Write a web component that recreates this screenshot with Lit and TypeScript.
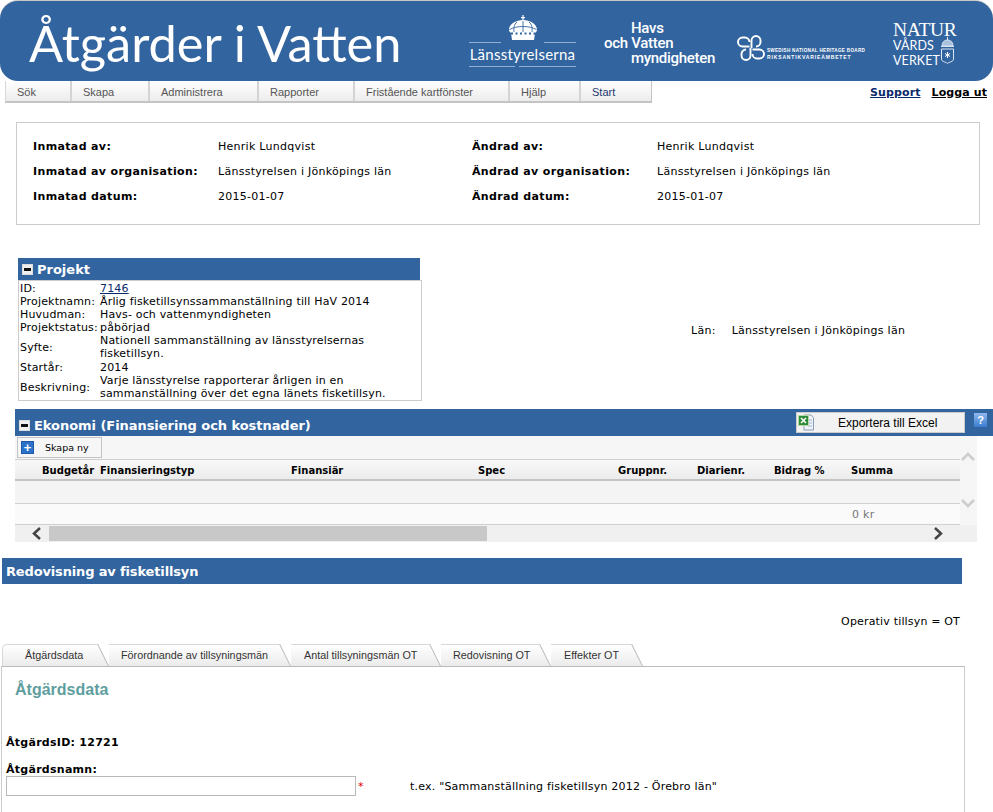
import { LitElement, html, css } from 'lit';
import { customElement } from 'lit/decorators.js';

const menu = [
  ['Sök', 66],
  ['Skapa', 78],
  ['Administrera', 109],
  ['Rapporter', 96],
  ['Fristående kartfönster', 155],
  ['Hjälp', 71],
  ['Start', 70],
] as const;

const projekt = [
  ['ID:', '7146'],
  ['Projektnamn:', 'Årlig fisketillsynssammanställning till HaV 2014'],
  ['Huvudman:', 'Havs- och vattenmyndigheten'],
  ['Projektstatus:', 'påbörjad'],
  ['Syfte:', 'Nationell sammanställning av länsstyrelsernas fisketillsyn.'],
  ['Startår:', '2014'],
  ['Beskrivning:', 'Varje länsstyrelse rapporterar årligen in en sammanställning över det egna länets fisketillsyn.'],
];

const columns = ['', 'Budgetår', 'Finansieringstyp', 'Finansiär', 'Spec', 'Gruppnr.', 'Diarienr.', 'Bidrag %', 'Summa'];

// label, tab width, text inset
const tabs = [
  ['Åtgärdsdata', 107, 23],
  ['Förordnande av tillsyningsmän', 182, 12],
  ['Antal tillsyningsmän OT', 150, 13],
  ['Redovisning OT', 110, 12],
  ['Effekter OT', 92, 13],
] as const;

@customElement('app-root')
export class AppRoot extends LitElement {
  static styles = css`
    :host {
      display: block;
      width: 993px;
      height: 812px;
      overflow: hidden;
      background: #fff;
      font-family: 'DejaVu Sans', Verdana, sans-serif;
      font-size: 11px;
      letter-spacing: 0.27px;
      color: #000;
    }
    .banner {
      height: 80px;
      margin-top: 1px;
      background: #32649f;
      border-radius: 18px;
      color: #fff;
      display: flex;
      align-items: flex-start;
      box-shadow: 0 -1px 0 #c8c8c8;
      letter-spacing: 0;
    }
    .title {
      font-family: Lato, sans-serif;
      font-size: 50.5px;
      line-height: 60px;
      margin: 12px 0 0 29px;
      width: 440px;
      white-space: nowrap;
    }
    .ls { width: 107px; margin-top: 14px; font-family: Lato, sans-serif; font-size: 15px; position: relative; }
    .ls svg { display: block; margin: 0 auto; }
    .ls .name { line-height: 24px; margin-top: 1px; text-align: center; letter-spacing: 0.25px; }
    .rule { position: absolute; height: 1px; background: #8fb0d2; }
    .hav { margin: 20px 0 0 28px; width: 133px; font-family: Roboto, sans-serif; font-weight: 500; font-size: 15px; line-height: 15px; letter-spacing: -0.3px; white-space: nowrap; }
    .hav div:nth-child(odd) { padding-left: 27px; }
    .raa { display: flex; gap: 2px; margin-top: 34px; width: 156px; }
    .raa svg { flex: none; }
    .raa .small { padding-top: 12px; font-family: 'Liberation Sans', sans-serif; font-size: 4.6px; line-height: 7px; letter-spacing: 0.3px; font-weight: 700; white-space: nowrap; }
    .raa .small div + div { font-size: 5px; letter-spacing: 0.86px; }
    .nv { margin: 20px 0 0 0; font-family: 'Liberation Serif', serif; position: relative; width: 70px; }
    .nv .n { font-size: 19.5px; line-height: 17px; letter-spacing: -0.3px; }
    .nv .v { font-family: Lato, sans-serif; font-size: 12.5px; line-height: 14px; letter-spacing: 0.1px; margin-top: 1px; }
    .nv svg { position: absolute; left: 47px; top: 16px; }

    .navrow { display: flex; justify-content: space-between; height: 22px; padding-left: 5px; }
    .menu { display: flex; height: 22px; box-sizing: border-box; border-bottom: 2px solid #c4c4c4; border-left: 1px solid #d8d8d8; border-right: 1px solid #c4c4c4; letter-spacing: 0; }
    .menu div {
      box-sizing: border-box;
      background: linear-gradient(#fff, #ececec);
      border-right: 2px solid #d4d4d4;
      padding: 4px 0 0 11px;
      font-family: 'Liberation Sans', sans-serif;
      font-size: 11px;
      line-height: 15px;
      color: #555;
    }
    .menu div:last-child { border-right: 0; color: #1c3a6e; }
    .links { display: flex; gap: 11px; padding: 4px 6px 0 0; font-weight: 700; font-size: 11px; line-height: 16px; letter-spacing: 0.1px; }
    .links a { color: #000; text-decoration: underline; }
    .links a:first-child { color: #0b2a6b; }

    .info {
      margin: 19px 0 0 16px;
      width: 964px;
      height: 103px;
      box-sizing: border-box;
      border: 1px solid #ccc;
      padding: 11px 0 0 16px;
      display: grid;
      grid-template-columns: 185px 254px 185px 1fr;
      grid-auto-rows: 25px;
      align-items: center;
    }
    .info b { letter-spacing: 0.36px; }

    .projrow { display: flex; margin-top: 33px; height: 151px; }
    .proj { margin-left: 18px; width: 404px; }
    .bar { background: #32649f; color: #fff; font-weight: 700; display: flex; align-items: center; letter-spacing: 0; }
    .proj .bar { height: 22px; width: 402px; font-size: 13px; gap: 4px; padding-left: 4px; box-sizing: border-box; }
    .minus { width: 11px; height: 11px; background: #f0f0f0; border: 1px solid #ddd; box-sizing: border-box; display: flex; align-items: center; justify-content: center; }
    .minus::before { content: ''; width: 7px; height: 3px; background: #111; }
    .props {
      box-sizing: border-box;
      width: 404px;
      border: 1px solid #ccc;
      padding: 1px 0 0 1px;
      display: grid;
      grid-template-columns: 80px 1fr;
      align-items: center;
      line-height: 13px;
      height: 121px;
      align-content: start;
      letter-spacing: 0.17px;
    }
    .props a { color: #0b2a6b; text-decoration: underline; }
    .props span:nth-child(odd) { white-space: nowrap; }
    .props span:nth-child(even) { padding-right: 24px; }
    .props span:nth-child(10) { padding-bottom: 1px; }
    .lan { margin: 66px 0 0 269px; display: flex; gap: 16px; line-height: 13px; }

    .eko { margin: 0 0 0 15px; }
    .eko .bar { height: 27px; font-size: 13px; padding: 5px 0 0 4px; box-sizing: border-box; position: relative; gap: 4px; letter-spacing: -0.05px; }
    .export {
      position: absolute; left: 781px; top: 3px; width: 169px; height: 21px; box-sizing: border-box;
      background: #f2f2f2; border: 1px solid #ccc; color: #000; font-weight: 400;
      font-family: 'Liberation Sans', sans-serif; font-size: 12px; letter-spacing: 0;
      display: flex; align-items: center; padding-left: 41px;
    }
    .export svg { position: absolute; left: 0; top: 0; }
    .export span { flex: 1; }
    .help { position: absolute; left: 959px; top: 4px; width: 13px; height: 14px; background: linear-gradient(#8fb8ec, #3b7dd0); color: #fff; font: 700 11px/14px 'Liberation Sans', sans-serif; text-align: center; }
    .grid { width: 962px; background: #f6f6f6; position: relative; }
    .tools { height: 23px; padding: 1px 0 0 2px; box-sizing: border-box; }
    .add { width: 85px; height: 21px; box-sizing: border-box; border: 1px solid #c4c4c4; background: #f6f6f6; display: flex; align-items: center; padding-left: 3px; gap: 11px; font: 9.5px 'DejaVu Sans', sans-serif; letter-spacing: 0; }
    .add i { width: 13px; height: 13px; background: #2b73c9; border: 1px solid #1d5aa5; box-sizing: border-box; display: flex; align-items: center; justify-content: center; color: #fff; font: 700 13px/11px 'Liberation Sans', sans-serif; }
    .cols {
      width: 945px;
      display: grid;
      grid-template-columns: 27px 58px 191px 187px 140px 79px 77px 77px 1fr;
      height: 22px;
      padding-top: 1px;
      box-sizing: border-box;
      border-top: 1px solid #d0d0d0;
      border-bottom: 2px solid #c4c4c4;
      background: linear-gradient(#f8f8f8, #ececec);
      align-items: center;
      font-weight: 700;
      font-size: 10px;
      letter-spacing: 0;
    }
    .row { width: 945px; box-sizing: border-box; }
    .row.a { height: 23px; background: #f4f4f4; border-bottom: 1px solid #d0d0d0; }
    .row.b { height: 21px; background: #fafafa; border-bottom: 1px solid #d0d0d0; color: #777; padding: 4px 0 0 837px; line-height: 14px; }
    .vscroll { position: absolute; right: 0; top: 16px; width: 17px; height: 60px; }
    .vscroll svg { position: absolute; left: 1px; }
    .hscroll { height: 17px; background: #f0f0f0; padding: 1px 0 0 34px; box-sizing: border-box; position: relative; }
    .thumb { width: 438px; height: 15px; background: #c8c8c8; }
    .hscroll svg { position: absolute; top: 2px; }

    .red { margin: 16px 0 0 2px; width: 960px; height: 26px; background: #32649f; color: #fff; font-weight: 700; font-size: 13px; line-height: 27px; padding-left: 4px; box-sizing: border-box; letter-spacing: -0.15px; }
    .ot { margin-top: 30px; padding-right: 33px; text-align: right; line-height: 16px; height: 16px; letter-spacing: 0.17px; }

    .tabs { display: flex; margin: 14px 0 0 2px; height: 22px; font-family: 'Liberation Sans', sans-serif; font-size: 10.8px; color: #333; isolation: isolate; letter-spacing: 0; }
    .tab { position: relative; line-height: 23px; box-sizing: border-box; white-space: nowrap; }
    .tab::before { content: ''; position: absolute; inset: 0 11px 0 0; background: linear-gradient(#fff, #ebebeb); border-top: 1px solid #d8d8d8; z-index: -1; }
    .tab:first-child::before { border-left: 1px solid #d8d8d8; border-top-left-radius: 5px; }
    .tab::after { content: ''; position: absolute; top: 0; bottom: 0; right: 0; width: 14px; transform: skewX(26.600deg); transform-origin: bottom right; background: linear-gradient(#fff, #ebebeb); border-top: 1px solid #d8d8d8; border-right: 1px solid #b4b4b4; z-index: -1; }
    .panel { margin-left: 1px; width: 964px; height: 160px; box-sizing: border-box; border: 1px solid #ccc; border-top: 1px solid #bbb; padding: 12px 0 0 4px; }
    h2 { margin: 0 0 0 9px; font: 700 16px/22px 'Liberation Sans', sans-serif; color: #5f9ea0; letter-spacing: 0; }
    .aid { margin-top: 34px; font-weight: 700; line-height: 16px; }
    .lbl { margin-top: 11px; font-weight: 700; line-height: 16px; }
    .field { display: flex; align-items: center; margin-top: -2px; letter-spacing: 0.21px; }
    .field input { width: 350px; height: 20px; box-sizing: border-box; border: 1px solid #b8b8b8; padding: 0; }
    .field em { color: #d00; font: 11px 'DejaVu Sans', sans-serif; width: 54px; padding-left: 2px; box-sizing: border-box; }
  `;

  render() {
    return html`
      <div class="banner">
        <div class="title">Åtgärder i Vatten</div>
        <div class="ls">
          <svg width="32" height="26" viewBox="0 0 32 26" fill="#fff">
            <path d="M15.400 0h1.200v2h1.400v1.200h-1.400V6h-1.200V3.200H14V2h1.400z" />
            <path d="M16 5c7 0 13 3.500 14 9 .3 2-1 3-2 4l-1 7H5l-1-7c-1-1-2.300-2-2-4C3 8.500 9 5 16 5z" />
            <path d="M16 6v11M10 7c-3 2.500-3.500 6-3 10M22 7c3 2.500 3.500 6 3 10M2.500 14.500c4-2 8-3 13.500-3s9.500 1 13.500 3" fill="none" stroke="#32649f" stroke-width=".9" />
            <path d="M4 18.500h24" stroke="#32649f" stroke-width="2" stroke-dasharray="2 2.500" />
          </svg>
          <div class="name">Länsstyrelserna</div>
          <i class="rule" style="left:0;top:27px;width:32px"></i>
          <i class="rule" style="left:75px;top:27px;width:32px"></i>
          <i class="rule" style="left:0;top:51px;width:46px"></i>
          <i class="rule" style="left:50px;top:51px;width:57px"></i>
        </div>
        <div class="hav"><div>Havs</div><div>och Vatten</div><div>myndigheten</div></div>
        <div class="raa">
          <svg width="28" height="26" viewBox="0 0 28 26" fill="none" stroke="#fff" stroke-width="1.900">
            <path d="M12.500 11.500H5.500a4.500 4.500 0 1 1 0-9h2.500a4.500 4.500 0 0 1 4.500 4.500" />
            <path d="M14.500 13V5.500a4.500 4.500 0 0 1 9 0v1.500a4.500 4.500 0 0 1-4.500 4.500" />
            <path d="M15.500 14.500h7a4.500 4.500 0 1 1 0 9H20a4.500 4.500 0 0 1-4.500-4.500" />
            <path d="M13.500 13v7.500a4.500 4.500 0 0 1-9 0V19a4.500 4.500 0 0 1 4.500-4.500" />
          </svg>
          <div class="small"><div>SWEDISH NATIONAL HERITAGE BOARD</div><div>RIKSANTIKVARIEÄMBETET</div></div>
        </div>
        <div class="nv">
          <div class="n">NATUR</div>
          <div class="v">VÅRDS</div>
          <div class="v">VERKET</div>
          <svg width="15" height="27" viewBox="0 0 15 27" fill="none" stroke="#dbe6f2" stroke-width="1">
            <path d="M2 9c0-4.500 3-6 5.500-6S13 4.500 13 9z" fill="#a9c1dc" />
            <path d="M7.500 0v3M1 9.500h13" />
            <path d="M1.500 12h12v10c0 3-5 3-6 4.500-1-1.500-6-1.500-6-4.500z" />
            <path d="M7.500 15v6M5 16.500l5 3M10 16.500l-5 3" stroke="#fff" />
          </svg>
        </div>
      </div>

      <div class="navrow">
        <div class="menu">${menu.map(([label, w]) => html`<div style="width:${w}px">${label}</div>`)}</div>
        <div class="links"><a href="#">Support</a><a href="#">Logga ut</a></div>
      </div>

      <div class="info">
        <b>Inmatad av:</b><span>Henrik Lundqvist</span><b>Ändrad av:</b><span>Henrik Lundqvist</span>
        <b>Inmatad av organisation:</b><span>Länsstyrelsen i Jönköpings län</span><b>Ändrad av organisation:</b><span>Länsstyrelsen i Jönköpings län</span>
        <b>Inmatad datum:</b><span>2015-01-07</span><b>Ändrad datum:</b><span>2015-01-07</span>
      </div>

      <div class="projrow">
        <div class="proj">
          <div class="bar"><i class="minus"></i>Projekt</div>
          <div class="props">
            ${projekt.map(([k, v], i) => html`<span>${k}</span><span>${i === 0 ? html`<a href="#">${v}</a>` : v}</span>`)}
          </div>
        </div>
        <div class="lan"><span>Län:</span><span>Länsstyrelsen i Jönköpings län</span></div>
      </div>

      <div class="eko">
        <div class="bar">
          <i class="minus"></i>Ekonomi (Finansiering och kostnader)
          <div class="export">
            <svg width="18" height="18" viewBox="0 0 18 18">
              <path d="M7 2h7l2.500 2.500V17H7z" fill="#eef3fa" stroke="#8a9cb8" />
              <path d="M11 7h4M11 10h4M11 13h4" stroke="#9fb4d0" />
              <rect x="1.500" y="2.500" width="10" height="10" fill="#2e8b3a" stroke="#b8d8a8" />
              <path d="M4 5l5 5M9 5l-5 5" stroke="#fff" stroke-width="1.500" />
            </svg>
            <span>Exportera till Excel</span>
          </div>
          <div class="help">?</div>
        </div>
        <div class="grid">
          <div class="tools"><div class="add"><i>+</i>Skapa ny</div></div>
          <div class="cols">${columns.map((c) => html`<span>${c}</span>`)}</div>
          <div class="row a"></div>
          <div class="row b">0 kr</div>
          <div class="vscroll">
            <svg style="top:0" width="14" height="10" viewBox="0 0 14 10" fill="none" stroke="#ccc" stroke-width="2.500"><path d="M1 8l6-6 6 6" /></svg>
            <svg style="top:46px" width="14" height="10" viewBox="0 0 14 10" fill="none" stroke="#ccc" stroke-width="2.500"><path d="M1 2l6 6 6-6" /></svg>
          </div>
          <div class="hscroll">
            <div class="thumb"></div>
            <svg style="left:17px" width="10" height="13" viewBox="0 0 10 13" fill="none" stroke="#444" stroke-width="2.500"><path d="M8 1L2 6.500 8 12" /></svg>
            <svg style="left:918px" width="10" height="13" viewBox="0 0 10 13" fill="none" stroke="#444" stroke-width="2.500"><path d="M2 1l6 5.500L2 12" /></svg>
          </div>
        </div>
      </div>

      <div class="red">Redovisning av fisketillsyn</div>
      <div class="ot">Operativ tillsyn = OT</div>

      <div class="tabs">
        ${tabs.map(([t, w, inset]) => html`<div class="tab" style="width:${w}px;padding-left:${inset}px">${t}</div>`)}
      </div>
      <div class="panel">
        <h2>Åtgärdsdata</h2>
        <div class="aid">ÅtgärdsID: 12721</div>
        <div class="lbl">Åtgärdsnamn:</div>
        <div class="field"><input type="text" /><em>*</em><span>t.ex. "Sammanställning fisketillsyn 2012 - Örebro län"</span></div>
      </div>
    `;
  }
}
